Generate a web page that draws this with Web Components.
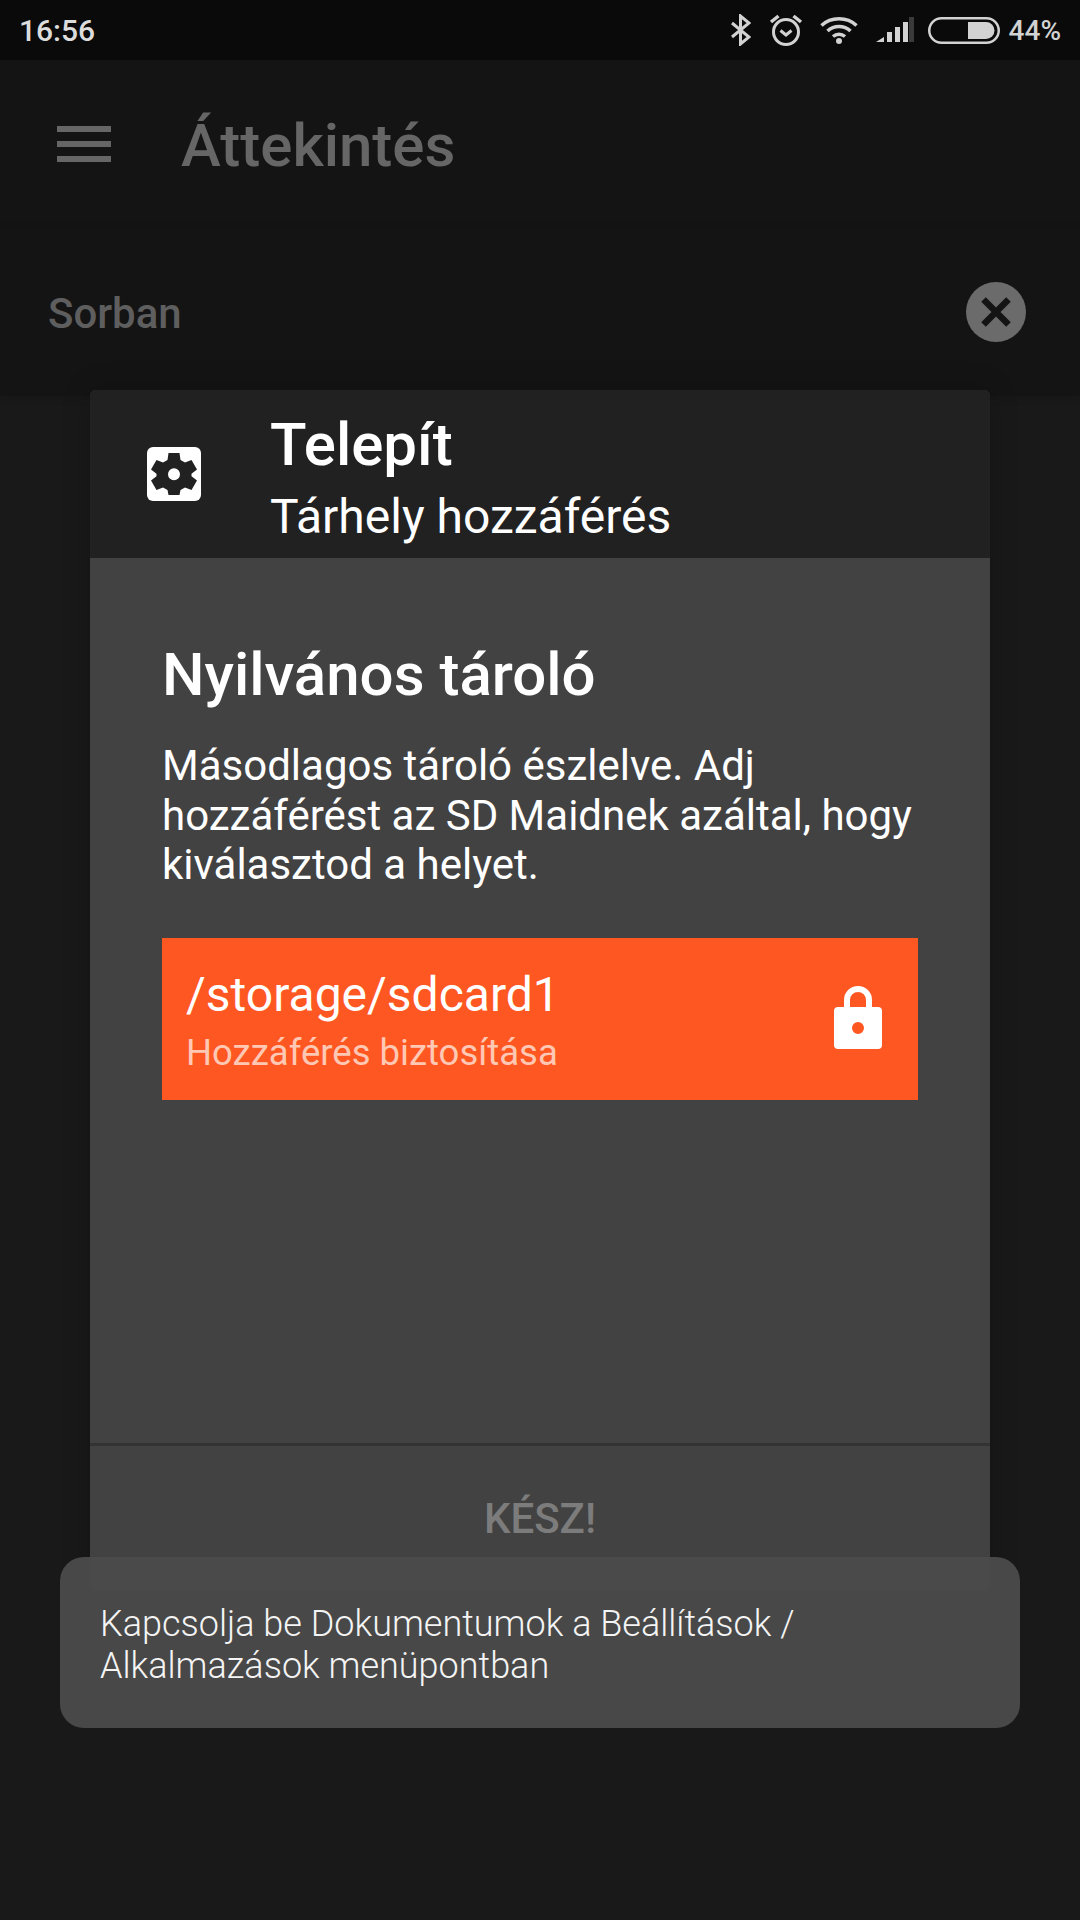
<!DOCTYPE html>
<html>
<head>
<meta charset="utf-8">
<style>
  html, body { margin: 0; padding: 0; background: #191919; }
</style>
</head>
<body>
<app-screen>
  <status-bar></status-bar>
  <app-bar>Áttekintés</app-bar>
  <queue-row>Sorban</queue-row>
  <setup-dialog slot="overlay" title-text="Telepít" subtitle="Tárhely hozzáférés" action="KÉSZ!">
    <h2 slot="heading">Nyilvános tároló</h2>
    <p slot="text">Másodlagos tároló észlelve. Adj hozzáférést az SD Maidnek azáltal, hogy kiválasztod a helyet.</p>
    <storage-item path="/storage/sdcard1" hint="Hozzáférés biztosítása"></storage-item>
  </setup-dialog>
  <toast-message slot="overlay">Kapcsolja be Dokumentumok a Beállítások / Alkalmazások menüpontban</toast-message>
</app-screen>

<script>
// Small helper, every element here is just a template + open shadow root
function shadow(el, html) {
  el.attachShadow({ mode: 'open' }).innerHTML = html
}

class AppScreen extends HTMLElement {
  constructor() {
    super()
    shadow(this, `
      <style>
        :host {
          display: block;
          position: relative;
          width: 1080px;
          height: 1920px;
          overflow: hidden;
          background: #191919;
          font-family: Roboto, "Liberation Sans", sans-serif;
        }
      </style>
      <slot></slot>
      <slot name="overlay"></slot>
    `)
  }
}

class StatusBar extends HTMLElement {
  constructor() {
    super()
    shadow(this, `
      <style>
        :host {
          display: flex;
          align-items: center;
          height: 60px;
          padding: 0 19px 0 19px;
          box-sizing: border-box;
          background: #0a0a0a;
          color: #d2d2d2;
          font-size: 28px;
          font-weight: 500;
        }
        .time { flex: 1; color: #dcdcdc; font-size: 30px; }
        svg { display: block; flex: none; }
        .icons { display: flex; align-items: center; }
      </style>
      <span class="time">16:56</span>
      <div class="icons">
        <svg width="20" height="32" viewBox="0 0 20 32" style="margin-right:18px" fill="none" stroke="#d2d2d2" stroke-width="3">
          <path d="M1 9 18 23 9.500 30V2L18 9 1 23"/>
        </svg>
        <svg width="34" height="34" viewBox="0 0 34 34" style="margin-right:17px" fill="none" stroke="#d2d2d2" stroke-width="3">
          <circle cx="17" cy="19" r="12.500"/>
          <path d="M11.500 17.500 17 22 22.500 17.500"/>
          <path d="M2 9 9.500 3M32 9 24.500 3" stroke-width="3.500"/>
        </svg>
        <svg width="38" height="28" viewBox="0 0 38 28" style="margin-right:18px" fill="none" stroke="#d2d2d2" stroke-width="3.500">
          <path d="M1.500 9.500C11 .5 27 .5 36.500 9.500"/>
          <path d="M7.500 15C14 9 24 9 30.500 15"/>
          <path d="M13 20.500C16.500 17.500 21.500 17.500 25 20.500"/>
          <circle cx="19" cy="25" r="3" fill="#d2d2d2" stroke="none"/>
        </svg>
        <svg width="38" height="26" viewBox="0 0 38 26" style="margin-right:14px">
          <path d="M0 25 8 20V25Z" fill="#d2d2d2"/>
          <rect x="11" y="15" width="5" height="10" fill="#d2d2d2"/>
          <rect x="19" y="10" width="5" height="15" fill="#d2d2d2"/>
          <rect x="27" y="5" width="5" height="20" fill="#d2d2d2"/>
          <rect x="33" y="0" width="5" height="25" fill="#3a3a3a"/>
        </svg>
        <svg width="72" height="27" viewBox="0 0 72 27" style="margin-right:9px">
          <rect x="1.250" y="1.250" width="69.500" height="24.500" rx="12.250" fill="none" stroke="#d2d2d2" stroke-width="2.500"/>
          <path d="M40 5H58A8.500 8.500 0 0 1 58 22H40Z" fill="#d2d2d2"/>
        </svg>
        <span>44%</span>
      </div>
    `)
  }
}

class AppBar extends HTMLElement {
  constructor() {
    super()
    shadow(this, `
      <style>
        :host {
          display: flex;
          align-items: center;
          height: 168px;
          box-sizing: border-box;
          padding: 0 0 0 57px;
          background: #141414;
          color: #666;
          font-size: 60px;
          font-weight: 500;
        }
        .menu { width: 54px; height: 36px; margin-right: 70px; flex: none; display: flex; flex-direction: column; justify-content: space-between; }
        .menu i { display: block; height: 6px; background: #666; }
        span { position: relative; top: 1px; }
      </style>
      <div class="menu"><i></i><i></i><i></i></div>
      <span><slot></slot></span>
    `)
  }
}

class QueueRow extends HTMLElement {
  constructor() {
    super()
    shadow(this, `
      <style>
        :host {
          display: flex;
          align-items: center;
          justify-content: space-between;
          height: 168px;
          box-sizing: border-box;
          padding: 0 54px 0 48px;
          background: #141414;
          color: #5e5e5e;
          font-size: 42px;
          font-weight: 500;
          box-shadow: 0 2px 8px rgba(0,0,0,.15);
        }
        span { padding-top: 2px; }
        svg { display: block; }
      </style>
      <span><slot></slot></span>
      <svg width="60" height="60" viewBox="0 0 60 60">
        <circle cx="30" cy="30" r="30" fill="#6b6b6b"/>
        <path d="M17.500 17.500 42.500 42.500M42.500 17.500 17.500 42.500" stroke="#141414" stroke-width="6.500" fill="none"/>
      </svg>
    `)
  }
}

class SetupDialog extends HTMLElement {
  constructor() {
    super()
    shadow(this, `
      <style>
        :host {
          display: flex;
          flex-direction: column;
          position: absolute;
          left: 90px;
          top: 390px;
          width: 900px;
          height: 1200px;
          border-radius: 6px;
          overflow: hidden;
          background: #424242;
          color: #fff;
          box-shadow: 0 0 30px rgba(0,0,0,.2);
        }
        header {
          display: flex;
          align-items: center;
          height: 168px;
          flex: none;
          box-sizing: border-box;
          padding-left: 57px;
          background: #212121;
        }
        header svg { display: block; margin-right: 70px; flex: none; }
        .titles { padding-top: 13px; }
        .title { font-size: 60px; font-weight: 500; line-height: 70px; margin-top: -4px; margin-left: -1px; }
        .sub { font-size: 48px; line-height: 62px; margin-top: 6px; margin-left: -1px; }
        main { flex: 1; padding: 84px 72px 0 72px; }
        footer {
          height: 147px;
          flex: none;
          box-sizing: border-box;
          border-top: 3px solid #333;
          display: flex;
          align-items: center;
          justify-content: center;
          color: #7c7c7c;
          font-size: 42px;
          font-weight: 500;
        }
        ::slotted(h2) { margin: 0 0 33px; font-size: 60px; font-weight: 500; line-height: 66px; }
        ::slotted(p) { margin: 0 0 48.500px; font-size: 42px; line-height: 49.500px; }
      </style>
      <header>
        <svg width="54" height="54" viewBox="0 0 54 54">
          <rect width="54" height="54" rx="6" fill="#fff"/>
          <path fill="#212121" fill-rule="evenodd" d="M21.500 6H32.500L33.500 13 38 15.600 44.500 13 50 22.500 44.500 26.800V29.200L50 33.500 44.500 43 38 40.400 33.500 43 32.500 48H21.500L20.500 43 16 40.400 9.500 43 4 33.500 9.500 29.200V26.800L4 22.500 9.500 13 16 15.600 20.500 13ZM27 21.300A6 6 0 1 0 27 33.300 6 6 0 1 0 27 21.300Z"/>
        </svg>
        <div class="titles">
          <div class="title">${this.getAttribute('title-text')}</div>
          <div class="sub">${this.getAttribute('subtitle')}</div>
        </div>
      </header>
      <main>
        <slot name="heading"></slot>
        <slot name="text"></slot>
        <slot></slot>
      </main>
      <footer>${this.getAttribute('action')}</footer>
    `)
  }
}

class StorageItem extends HTMLElement {
  constructor() {
    super()
    shadow(this, `
      <style>
        :host {
          display: flex;
          align-items: center;
          justify-content: space-between;
          height: 162px;
          box-sizing: border-box;
          padding: 0 36px 0 24px;
          background: #ff5722;
          color: #fff;
        }
        .text { padding-top: 2px; }
        .path { font-size: 48px; line-height: 56px; }
        .hint { font-size: 36.500px; line-height: 40px; margin-top: 10px; color: #ffc8b4; }
        svg { display: block; margin-bottom: 4px; }
      </style>
      <div class="text">
        <div class="path">${this.getAttribute('path')}</div>
        <div class="hint">${this.getAttribute('hint')}</div>
      </div>
      <svg width="48" height="63" viewBox="0 0 48 63">
        <path d="M13 25V14A11 11 0 0 1 35 14V25" fill="none" stroke="#fff" stroke-width="6"/>
        <path fill="#fff" fill-rule="evenodd" d="M4 21H44A4 4 0 0 1 48 25V59A4 4 0 0 1 44 63H4A4 4 0 0 1 0 59V25A4 4 0 0 1 4 21ZM24 36A6 6 0 1 0 24 48 6 6 0 1 0 24 36Z"/>
      </svg>
    `)
  }
}

class ToastMessage extends HTMLElement {
  constructor() {
    super()
    shadow(this, `
      <style>
        :host {
          display: block;
          position: absolute;
          left: 60px;
          top: 1557px;
          width: 960px;
          height: 171px;
          box-sizing: border-box;
          padding: 47px 200px 0 40px;
          border-radius: 24px;
          background: rgba(74,74,74,.97);
          color: #f4f4f4;
          font-size: 36px;
          font-weight: 300;
          line-height: 41.500px;
        }
      </style>
      <slot></slot>
    `)
  }
}

customElements.define('app-screen', AppScreen)
customElements.define('status-bar', StatusBar)
customElements.define('app-bar', AppBar)
customElements.define('queue-row', QueueRow)
customElements.define('setup-dialog', SetupDialog)
customElements.define('storage-item', StorageItem)
customElements.define('toast-message', ToastMessage)
</script>
</body>
</html>
